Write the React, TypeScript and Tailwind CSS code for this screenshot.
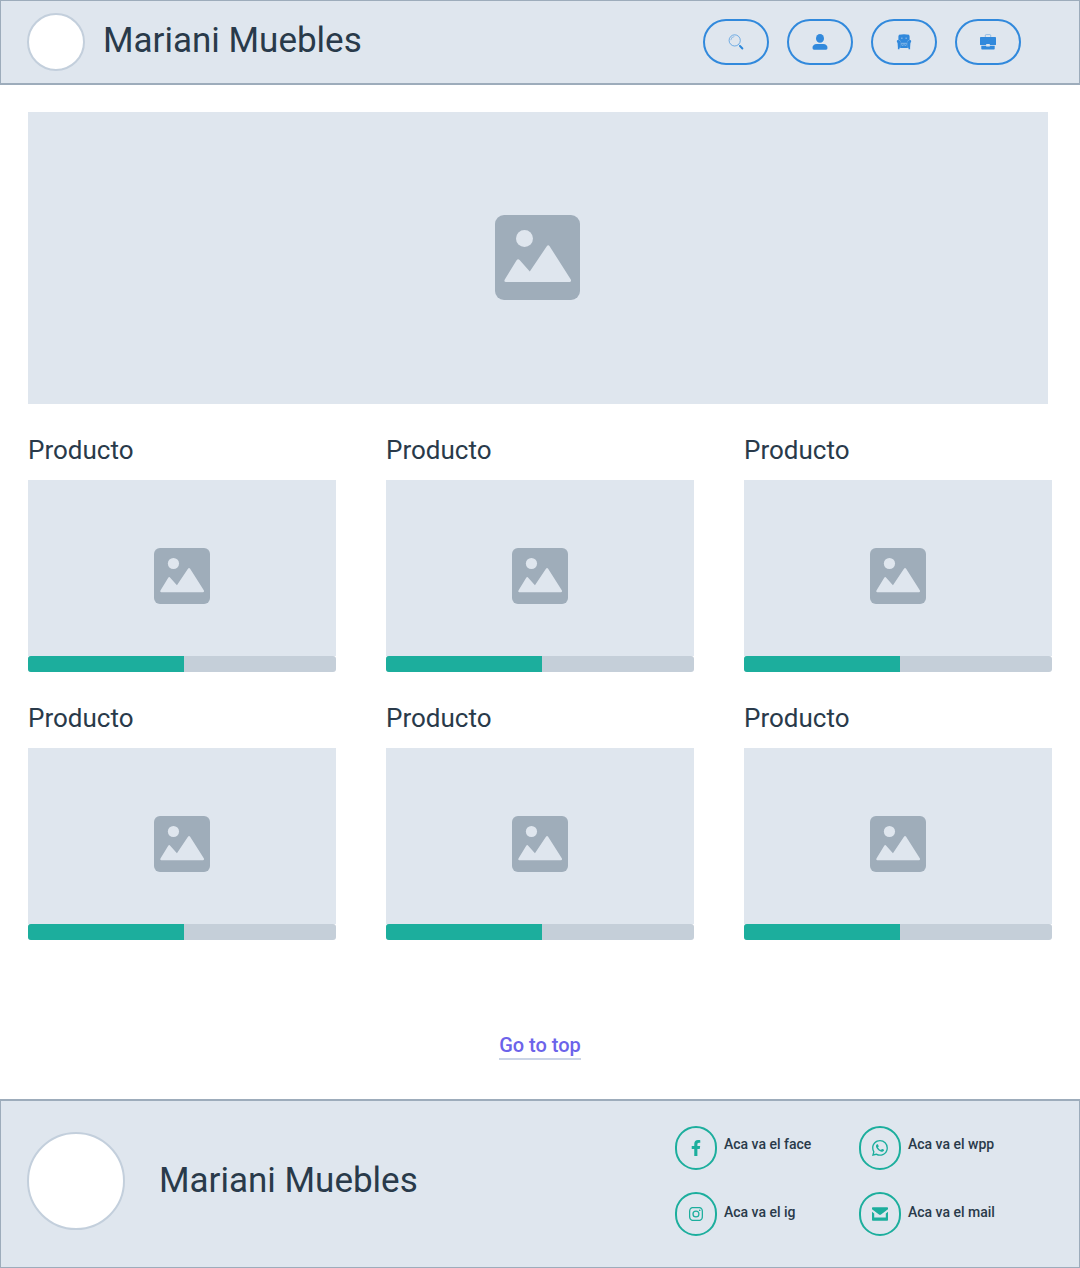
import type { ReactNode } from "react";
import { FaFacebookF } from "react-icons/fa";
import { BsInstagram, BsWhatsapp } from "react-icons/bs";

function ImageIcon({ className }: { className: string }) {
  return (
    <svg viewBox="0 0 85 85" className={className} aria-hidden="true">
      <rect width="85" height="85" rx="9" fill="#9fadba" />
      <circle cx="29.5" cy="23.5" r="8.5" fill="#dfe6ee" />
      <path
        d="M9.8 64.6 21.6 45.2Q23 43.2 24.6 45L34.8 56.6 51.8 31.2Q53.2 29.2 54.6 31.2L75.8 64.6Q76.6 67 74.4 67H11Q8.6 67 9.8 64.6Z"
        fill="#dfe6ee"
      />
    </svg>
  );
}

function SearchIcon() {
  return (
    <svg viewBox="0 0 16 16" className="size-4" fill="none" aria-hidden="true">
      <circle cx="6.7" cy="6.4" r="5.6" stroke="#3a90de" strokeWidth="0.8" strokeOpacity="0.85" />
      <path d="M2.8 6.2A4 4 0 0 1 6.4 2.5" stroke="#3a90de" strokeWidth="0.6" strokeOpacity="0.8" />
      <path d="m10.8 10.7 1 1" stroke="#3a90de" strokeWidth="0.8" />
      <path d="m12 12 2.4 2.5" stroke="#2b87da" strokeWidth="1.9" strokeLinecap="round" />
    </svg>
  );
}

function UserIcon() {
  return (
    <svg viewBox="0 0 16 16" className="size-4" fill="#3189dc" aria-hidden="true">
      <ellipse cx="8" cy="4.4" rx="4" ry="4.3" />
      <path d="M.5 14C.5 11.5 2 10.200 4.600 10H11.400C14 10.200 15.500 11.500 15.500 14Q15.500 15.700 14 15.700H2Q.5 15.700.5 14Z" />
    </svg>
  );
}

function ArmchairIcon() {
  return (
    <svg viewBox="0 0 16 16" className="size-4" fill="#3189dc" aria-hidden="true">
      <path d="M3 .8Q8-.2 13 .8L13.600 2.200V6.400H12L11.200 8.400H4.800L4 6.400H2.400V2.200Z" />
      <path d="M1 6.300 2.600 5.900 4.400 7.200V13.800H3.500V15.200H1.900V13.600L1.600 9.200.8 7.600Z" />
      <path d="M15 6.300 13.400 5.900 11.600 7.200V13.800H12.500V15.200H14.100V13.600L14.400 9.200 15.200 7.600Z" />
      <path d="M4.200 7.800H11.800V14H4.200Z" />
      <path d="M5 9.300H11M5.200 10.600 6.400 11.400 7.300 10.600 8 11.400 8.700 10.600 9.600 11.400 10.800 10.600" fill="none" stroke="#dfe6ee" strokeWidth="0.5" />
      <path d="M5 4.200H6.600M9.400 4.200H11" stroke="#dfe6ee" strokeWidth="0.6" />
    </svg>
  );
}

function BriefcaseIcon() {
  return (
    <svg viewBox="0 0 16 16" className="size-4" fill="#3189dc" aria-hidden="true">
      <path d="M5.300 3V1.500Q5.300.6 6.200.6H9.800Q10.700.6 10.700 1.500V3" fill="none" stroke="#3189dc" strokeWidth="0.6" strokeOpacity="0.7" />
      <path d="M.8 2.900H15.200Q16 2.900 16 3.700V10.400Q16 11.100 15.200 11.100H9.800V10H6.200V11.100H.8Q0 11.100 0 10.400V3.700Q0 2.900.8 2.900Z" />
      <path d="M1.300 11.700H6.200V12.400H9.800V11.700H14.700V14.700Q14.700 15.500 13.900 15.500H2.100Q1.300 15.500 1.300 14.700Z" />
    </svg>
  );
}

function MailIcon() {
  return (
    <svg viewBox="0 0 16 16" className="size-4" fill="#1cae9d" aria-hidden="true">
      <path d="M.8 1.300H15.200Q16 1.300 16 2.100V3.200L9 8.500Q8 9.300 7 8.500L0 3.200V2.100Q0 1.300.8 1.300Z" />
      <path d="M0 5.800 2.200 7.500V11.400H13.800V7.500L16 5.800V13.900Q16 14.700 15.200 14.700H.8Q0 14.700 0 13.900Z" />
    </svg>
  );
}

const actions: { label: string; icon: ReactNode }[] = [
  { label: "Buscar", icon: <SearchIcon /> },
  { label: "Usuario", icon: <UserIcon /> },
  { label: "Muebles", icon: <ArmchairIcon /> },
  { label: "Pedidos", icon: <BriefcaseIcon /> },
];

const products = [1, 2, 3, 4, 5, 6];

const contacts: { text: string; icon: ReactNode; lift: string }[] = [
  { text: "Aca va el face", icon: <FaFacebookF className="size-4" />, lift: "pb-2" },
  { text: "Aca va el wpp", icon: <BsWhatsapp className="size-4" />, lift: "pb-2" },
  { text: "Aca va el ig", icon: <BsInstagram className="size-3.5" />, lift: "pb-1" },
  { text: "Aca va el mail", icon: <MailIcon />, lift: "pb-1" },
];

function Product({ id }: { id: number }) {
  return (
    <article>
      <h2 id={`producto-${id}`} className="text-[26px] leading-8">
        Producto
      </h2>
      <div className="mt-3.5 flex h-44 items-center justify-center bg-[#dfe6ee]">
        <ImageIcon className="mt-4 size-14" />
      </div>
      <progress
        aria-labelledby={`producto-${id}`}
        value={156}
        max={308}
        className="block h-4 w-full appearance-none overflow-hidden rounded-[3px] border-none [&::-webkit-progress-bar]:bg-[#c5cfd9] [&::-webkit-progress-value]:bg-[#1cae9d]"
      />
    </article>
  );
}

export default function App() {
  return (
    <div id="top" className="flex min-h-screen flex-col bg-white font-['Roboto','Liberation_Sans',sans-serif] text-[#293a4a]">
      <header className="flex items-center border border-b-2 border-[#9dacbb] bg-[#dfe6ee] pt-3 pr-[58px] pb-3 pl-[26px]">
        <div className="size-[58px] shrink-0 rounded-full border-2 border-[#c3cfdc] bg-white" />
        <h1 className="ml-[18px] pb-0.5 text-[35px] leading-[54px]">Mariani Muebles</h1>
        <nav className="ml-auto flex gap-[18px]">
          {actions.map((action) => (
            <button
              key={action.label}
              type="button"
              aria-label={action.label}
              className="flex h-[46px] w-[66px] items-center justify-center rounded-full border-2 border-[#3189dc]"
            >
              {action.icon}
            </button>
          ))}
        </nav>
      </header>

      <main className="flex flex-col pr-7 pl-7">
        <section className="mt-[27px] mr-1 flex h-[292px] items-center justify-center bg-[#dfe6ee] pr-px pb-px">
          <ImageIcon className="size-[85px]" />
        </section>
        <section className="mt-[30px] grid grid-cols-3 gap-x-[50px] gap-y-[30px]">
          {products.map((id) => (
            <Product key={id} id={id} />
          ))}
        </section>
        <a
          href="#top"
          className="mt-[92px] mb-[39px] self-center border-b-2 border-[#cad4e6] text-[20px] leading-[26px] font-medium text-[#6c63ea]"
        >
          Go to top
        </a>
      </main>

      <footer className="mt-auto flex items-center border border-t-2 border-[#9dacbb] bg-[#dfe6ee] pt-[25px] pr-14 pb-[31px] pl-[26px]">
        <div className="size-[98px] shrink-0 rounded-full border-2 border-[#c3cfdc] bg-white" />
        <p className="ml-[34px] text-[35px] leading-[54px]">Mariani Muebles</p>
        <ul className="ml-auto grid grid-cols-2 gap-x-5 gap-y-[22px]">
          {contacts.map((contact) => (
            <li key={contact.text}>
              <a href="#top" className="flex w-[164px] items-center text-[14px] leading-5 font-medium">
                <span className="flex h-11 w-[42px] shrink-0 items-center justify-center rounded-full border-2 border-[#1cae9d] text-[#1cae9d]">
                  {contact.icon}
                </span>
                <span className={`ml-[7px] ${contact.lift}`}>{contact.text}</span>
              </a>
            </li>
          ))}
        </ul>
      </footer>
    </div>
  );
}
